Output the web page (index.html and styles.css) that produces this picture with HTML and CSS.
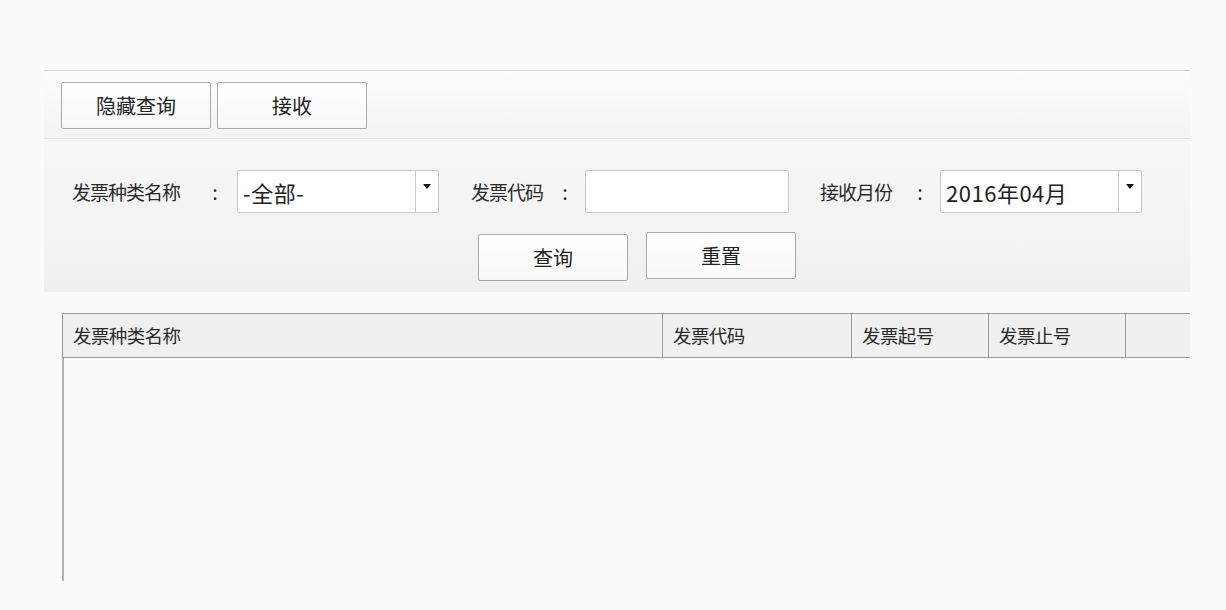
FILE: index.html
```html
<!DOCTYPE html>
<html lang="zh-CN">
<head>
    <meta charset="UTF-8">
    <meta name="viewport" content="width=device-width, initial-scale=1.0">
    <title>发票接收</title>
    <link rel="stylesheet" href="styles.css">
</head>
<body>
    <div class="page">
        <div class="toolbar">
            <button class="btn">隐藏查询</button>
            <button class="btn">接收</button>
        </div>

        <div class="search">
            <div class="search-row">
                <label class="field-label type-label">发票种类名称<span class="colon">:</span></label>
                <div class="select">
                    <span class="select-text">-全部-</span>
                    <span class="select-arrow"></span>
                </div>
                <label class="field-label code-label">发票代码<span class="colon">:</span></label>
                <div class="input"></div>
                <label class="field-label month-label">接收月份<span class="colon">:</span></label>
                <div class="select">
                    <span class="select-text">2016年04月</span>
                    <span class="select-arrow"></span>
                </div>
            </div>
            <div class="search-actions">
                <button class="btn btn-query">查询</button>
                <button class="btn btn-reset">重置</button>
            </div>
        </div>

        <div class="grid">
            <div class="grid-head">
                <div class="col col-type">发票种类名称</div>
                <div class="col col-code">发票代码</div>
                <div class="col col-start">发票起号</div>
                <div class="col col-end">发票止号</div>
                <div class="col col-rest"></div>
            </div>
            <div class="grid-body"></div>
        </div>
    </div>
</body>
</html>
```

FILE: styles.css
```css
body {
    margin: 0;
    background: #fcfbfc;
    font-family: "Noto Sans CJK SC", "Noto Sans", sans-serif;
    color: #222;
}
.page {
    width: 1146px;
    padding: 70px 0 0 44px;
}
.toolbar {
    height: 69px;
    box-sizing: border-box;
    border-top: 1px solid #d4d4d4;
    border-bottom: 1px solid #e2e2e2;
    background: linear-gradient(to bottom, #fdfdfd, #f3f3f3);
    display: flex;
    gap: 6px;
    padding: 11px 0 0 17px;
}
.btn {
    width: 150px;
    height: 47px;
    border: 1px solid #a9a9a9;
    border-radius: 2px;
    background: linear-gradient(to bottom, #ffffff, #f8f8f8);
    font-family: inherit;
    font-size: 20px;
    color: #222;
    padding: 0;
    line-height: 1;
}
.search {
    height: 153px;
    background: linear-gradient(to bottom, #f7f7f7, #f0f0f0);
    padding: 31px 0 0 28px;
    box-sizing: border-box;
}
.search-row {
    display: flex;
    align-items: center;
    height: 43px;
}
.field-label {
    font-size: 19px;
    letter-spacing: -1px;
    color: #2a2a2a;
    white-space: nowrap;
}
.colon {
    display: inline-block;
    width: 8px;
    text-align: center;
    font-size: 20px;
    letter-spacing: 0;
}
.type-label .colon {
    margin-left: 31px;
    margin-right: 18px;
}
.code-label {
    margin-left: 32px;
}
.code-label .colon {
    margin-left: 18px;
    margin-right: 16px;
}
.month-label {
    margin-left: 31px;
}
.month-label .colon {
    margin-left: 24px;
    margin-right: 16px;
}
.select {
    width: 202px;
    height: 43px;
    box-sizing: border-box;
    border: 1px solid #c9c9c9;
    border-radius: 2px;
    background: #fff;
    display: flex;
    align-items: center;
}
.select-text {
    flex: 1;
    padding-left: 5px;
    font-size: 22px;
    letter-spacing: 0.5px;
    color: #222;
}
.select-arrow {
    width: 22px;
    height: 100%;
    border-left: 1px solid #c9c9c9;
    position: relative;
}
.select-arrow::after {
    content: "";
    position: absolute;
    left: 7px;
    top: 13px;
    border-left: 4px solid transparent;
    border-right: 4px solid transparent;
    border-top: 5px solid #111;
}
.input {
    width: 204px;
    height: 43px;
    box-sizing: border-box;
    border: 1px solid #c9c9c9;
    border-radius: 2px;
    background: #fff;
}
.search-actions {
    display: flex;
    align-items: flex-start;
    gap: 18px;
    padding: 19px 0 0 406px;
}
.btn-query {
    margin-top: 2px;
}
.grid {
    margin: 21px 0 0 18px;
    width: 1128px;
}
.grid-head {
    display: flex;
    height: 45px;
    box-sizing: border-box;
    border-top: 1px solid #9a9a9a;
    border-bottom: 1px solid #9a9a9a;
    border-left: 1px solid #9a9a9a;
    background: #f0f0f0;
}
.col {
    box-sizing: border-box;
    border-right: 1px solid #9a9a9a;
    font-size: 18.5px;
    letter-spacing: -0.6px;
    color: #2a2a2a;
    line-height: 43px;
    padding-left: 10px;
}
.col-type { width: 600px; }
.col-code { width: 189px; }
.col-start { width: 137px; }
.col-end { width: 137px; }
.col-rest {
    flex: 1;
    border-right: none;
}
.grid-body {
    height: 223px;
    border-left: 2px solid #b4b4b8;
}
```
